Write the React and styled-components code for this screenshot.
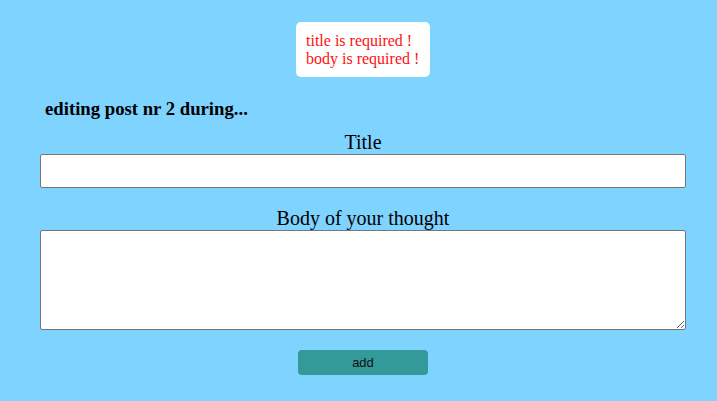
import React from 'react'
import styled, { createGlobalStyle } from 'styled-components'

const Global = createGlobalStyle`
  html, body {
    margin: 0;
    padding: 0;
    background-color: #7fd3ff;
    font-family: "Liberation Serif", "Times New Roman", serif;
  }
`

const Page = styled.div`
  width: 717px;
  height: 401px;
  background-color: #7fd3ff;
  display: flex;
  flex-direction: column;
  padding: 22px 31px 0 40px;
  box-sizing: border-box;
`

const Errors = styled.div`
  align-self: center;
  background-color: white;
  border-radius: 5px;
  padding: 10px 10px 9px 10px;
  color: #ff1010;
  font-size: 16px;
  line-height: 18px;
  width: 134px;
  box-sizing: border-box;
`

const Heading = styled.h3`
  margin: 21px 0 0 5px;
  font-size: 18.72px;
  line-height: 22px;
  font-weight: bold;
  color: black;
`

const Label = styled.label`
  display: block;
  text-align: center;
  font-size: 20px;
  line-height: 23px;
  margin-top: ${props => props.gap}px;
  color: black;
`

const Input = styled.input`
  display: block;
  width: 100%;
  height: 34px;
  box-sizing: border-box;
  border: 1px solid #767676;
  border-radius: 2px;
  background: white;
  margin: 0;
`

const Area = styled.textarea`
  display: block;
  width: 100%;
  height: 100px;
  box-sizing: border-box;
  border: 1px solid #767676;
  border-radius: 2px;
  background: white;
  margin: 0;
`

const Button = styled.button`
  align-self: center;
  margin-top: 20px;
  width: 130px;
  height: 25px;
  border: none;
  border-radius: 4px;
  background-color: #339999;
  color: #111;
  font-family: "Liberation Sans", Arial, sans-serif;
  font-size: 13px;
`

const App = () => {
  return (
    <Page>
      <Global />
      <Errors>
        <div>title is required !</div>
        <div>body is required !</div>
      </Errors>
      <Heading>editing post nr 2 during...</Heading>
      <Label gap={11}>Title</Label>
      <Input />
      <Label gap={19}>Body of your thought</Label>
      <Area />
      <Button>add</Button>
    </Page>
  )
}

export default App
